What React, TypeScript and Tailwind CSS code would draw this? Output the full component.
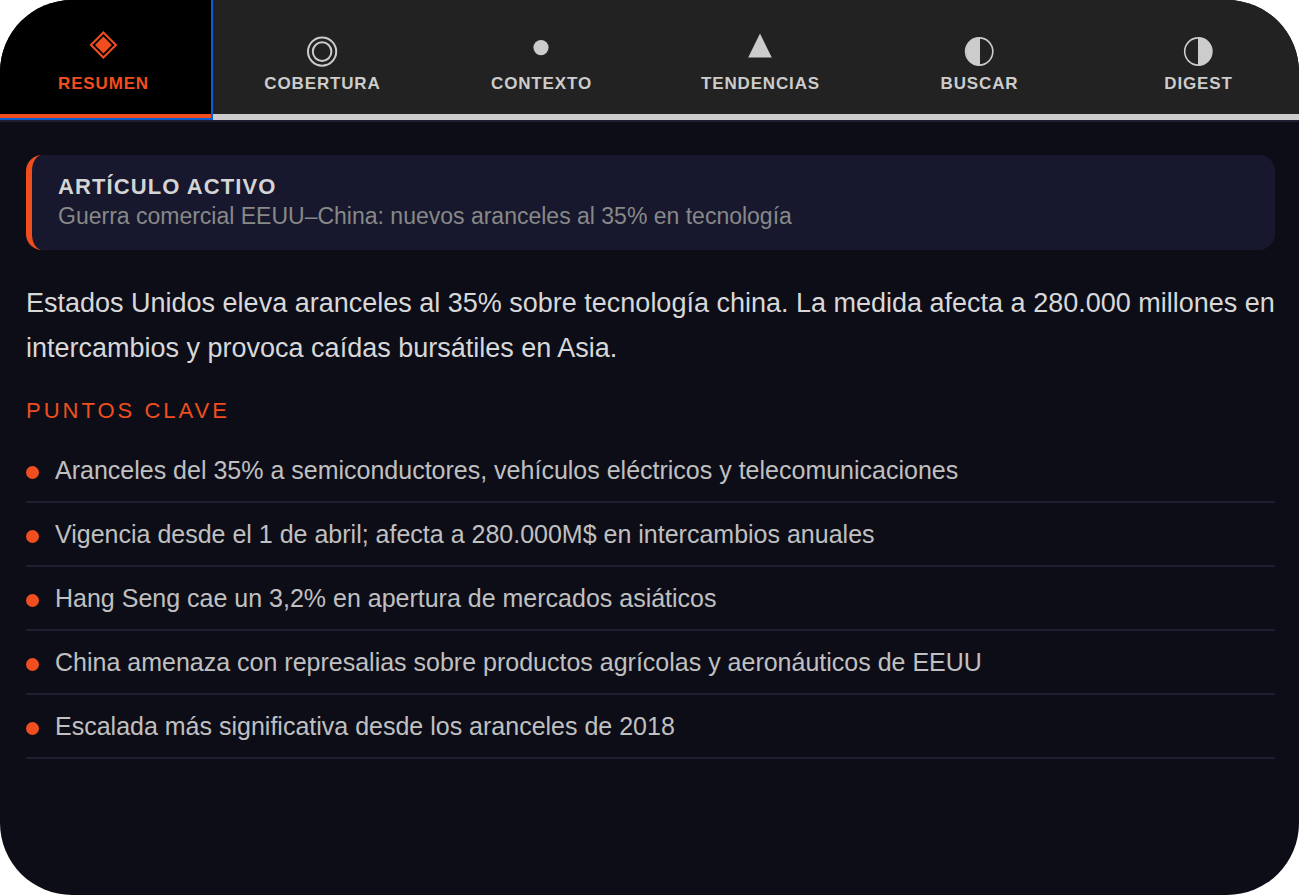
import React, { useState } from 'react';
import clsx from 'clsx';

interface Tab {
  id: string;
  label: string;
  icon: React.ReactNode;
}

const tabs: Tab[] = [
  {
    id: 'resumen',
    label: 'Resumen',
    icon: (
      <>
        <path d="M17.4 2.5 29.9 15 17.4 27.5 4.9 15Z" fill="none" stroke="currentColor" strokeWidth="2" />
        <path d="M17.4 6.6 25.8 15 17.4 23.4 9 15Z" fill="currentColor" />
      </>
    ),
  },
  {
    id: 'cobertura',
    label: 'Cobertura',
    icon: (
      <g fill="none" stroke="currentColor" strokeWidth="2">
        <circle cx="17.1" cy="21.6" r="14.1" />
        <circle cx="17.1" cy="21.6" r="9.3" />
      </g>
    ),
  },
  {
    id: 'contexto',
    label: 'Contexto',
    icon: <circle cx="17" cy="17.6" r="7.6" fill="currentColor" />,
  },
  {
    id: 'tendencias',
    label: 'Tendencias',
    icon: <path d="M17 3.6 28.8 27.4H5.2Z" fill="currentColor" />,
  },
  {
    id: 'buscar',
    label: 'Buscar',
    icon: (
      <>
        <circle cx="17.2" cy="21.5" r="13.6" fill="none" stroke="currentColor" strokeWidth="1.6" />
        <path d="M18 7.5A14 14 0 0 0 18 35.5Z" fill="currentColor" />
      </>
    ),
  },
  {
    id: 'digest',
    label: 'Digest',
    icon: (
      <>
        <circle cx="17.3" cy="21.5" r="13.6" fill="none" stroke="currentColor" strokeWidth="1.6" />
        <path d="M17 7.5A14 14 0 0 1 17 35.5Z" fill="currentColor" />
      </>
    ),
  },
];

const keyPoints = [
  'Aranceles del 35% a semiconductores, vehículos eléctricos y telecomunicaciones',
  'Vigencia desde el 1 de abril; afecta a 280.000M$ en intercambios anuales',
  'Hang Seng cae un 3,2% en apertura de mercados asiáticos',
  'China amenaza con represalias sobre productos agrícolas y aeronáuticos de EEUU',
  'Escalada más significativa desde los aranceles de 2018',
];

function App() {
  const [active, setActive] = useState('resumen');

  return (
    <div className="flex min-h-screen bg-white pb-px font-['Liberation_Sans',Arial,sans-serif]">
      <div className="flow-root min-w-0 flex-1 overflow-hidden rounded-[72px] bg-[#0d0d18]">
        {/* the tab strip bleeds past the top and side edges of the panel */}
        <nav className="-mt-0.5 -mr-[9px] -ml-1.5 grid grid-cols-6 border-b-2 border-[#1e1e32]">
          {tabs.map((tab) => (
            <button
              key={tab.id}
              type="button"
              onClick={() => setActive(tab.id)}
              className={clsx(
                'flex flex-col items-center border-b-6 pt-8 pb-5 text-[17px] leading-5 font-bold tracking-wider uppercase',
                active === tab.id
                  ? 'border-[#f04e1e] bg-black text-[#f04e1e] outline-2 -outline-offset-2 outline-[#0a60d0]'
                  : 'border-[#cccccc] bg-[#222222] text-[#cccccc]'
              )}
            >
              <svg viewBox="0 0 36 36" className="mb-2 size-9 overflow-visible" aria-hidden="true">
                {tab.icon}
              </svg>
              {tab.label}
            </button>
          ))}
        </nav>

        <main className="pt-[33px] pr-6 pb-8 pl-[26px]">
          <section className="rounded-2xl border-l-6 border-[#f04e1e] bg-[#17182d] px-[26px] pt-[18px] pb-[19px]">
            <h2 className="text-[22px] leading-7 font-bold tracking-wider text-[#d4d4d4] uppercase">
              Artículo activo
            </h2>
            <p className="text-[23px] leading-[30px] text-[#888888]">
              Guerra comercial EEUU–China: nuevos aranceles al 35% en tecnología
            </p>
          </section>

          <p className="mt-[31px] text-[27px] leading-[45px] text-[#d8d8d8]">
            Estados Unidos eleva aranceles al 35% sobre tecnología china. La medida afecta a 280.000
            millones en intercambios y provoca caídas bursátiles en Asia.
          </p>

          <h3 className="mt-[26px] text-[22px] leading-7 tracking-[3px] text-[#f04e1e] uppercase">
            Puntos clave
          </h3>

          <ul className="mt-3.5">
            {keyPoints.map((point) => (
              <li
                key={point}
                className="flex items-center gap-4 border-b-2 border-[#1e1e32] py-3.5 text-[25px] leading-[34px] text-[#c0c0c0]"
              >
                <span className="mt-1 size-[13px] shrink-0 rounded-full bg-[#f04e1e]" />
                {point}
              </li>
            ))}
          </ul>
        </main>
      </div>
    </div>
  );
}

export default App;
